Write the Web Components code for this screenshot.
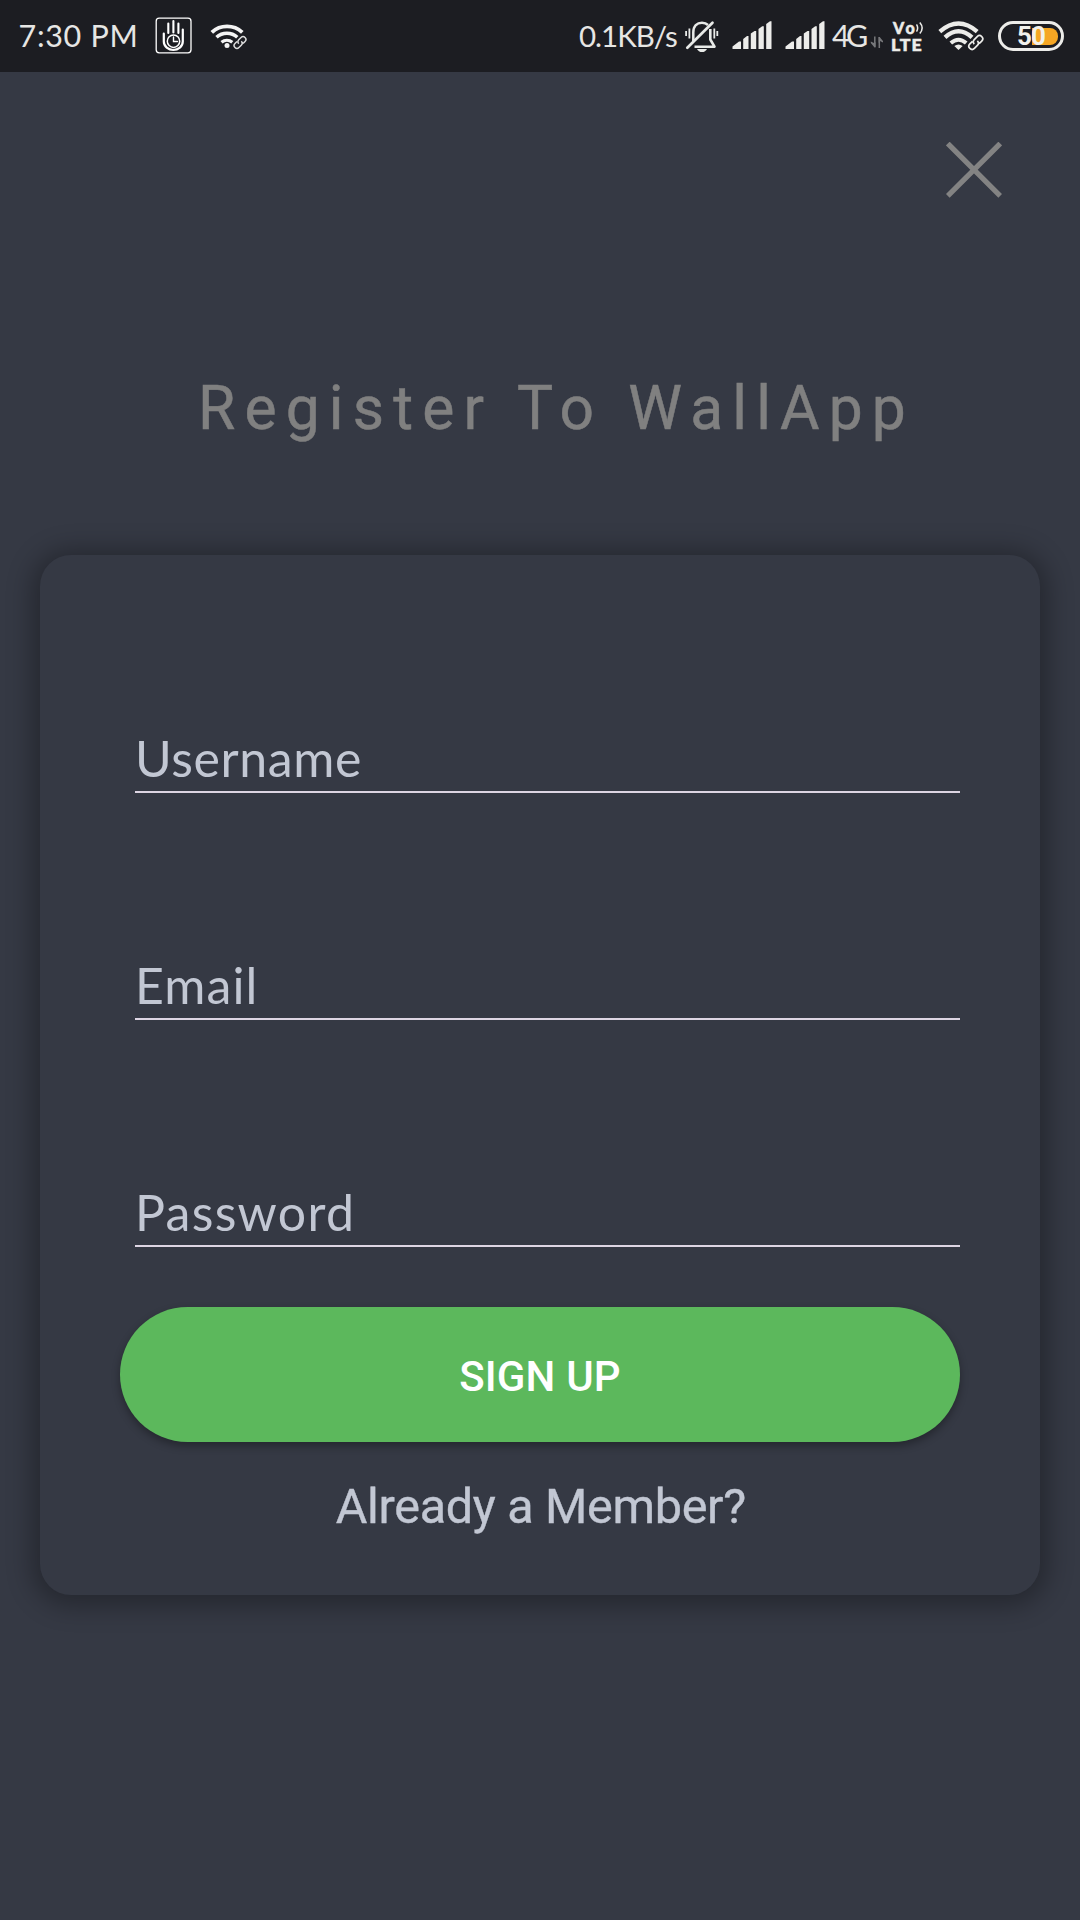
<!DOCTYPE html>
<html lang="en">
<head>
<meta charset="utf-8">
<title>WallApp</title>
<style>
html,body{margin:0;padding:0;background:#353944}
</style>
</head>
<body>
<register-screen></register-screen>
<script>
const define = (name, html, ready) => {
  const tpl = document.createElement('template');
  tpl.innerHTML = html;
  customElements.define(name, class extends HTMLElement {
    connectedCallback() {
      if (this.shadowRoot) return;
      this.attachShadow({mode: 'open'}).append(tpl.content.cloneNode(true));
      if (ready) ready(this, this.shadowRoot);
    }
  });
};

/* One line of text whose ink spans exactly the `w` attribute; `gap` widens its spaces. */
define('fit-text', `<style>
:host{display:block;white-space:pre;flex:none}
</style><slot></slot>`, (el) => {
  const text = el.textContent, cs = getComputedStyle(el);
  const c = document.createElement('canvas').getContext('2d');
  c.font = cs.fontWeight + ' ' + cs.fontSize + ' ' + cs.fontFamily;
  const m = c.measureText(text), w = +el.getAttribute('w');
  const gap = +(el.getAttribute('gap') || 0);
  const ink = m.actualBoundingBoxLeft + m.actualBoundingBoxRight + gap * (text.split(' ').length - 1);
  el.style.letterSpacing = (w - ink) / (text.length - 1) + 'px';
  el.style.wordSpacing = gap + 'px';
  el.style.textIndent = m.actualBoundingBoxLeft + 'px';
  el.style.width = w + 'px';
});

define('timer-icon', `<style>:host{display:block;flex:none;width:38px;height:72px}svg{display:block}</style>
<svg width="38" height="72" viewBox="155 0 38 72" fill="none" stroke="#fff" stroke-linecap="round">
<rect x="156.200" y="18.200" width="34.800" height="34.600" rx="3" stroke-width="1.300"/>
<path d="M168.300 23.500V33M173.400 21V32.500M178.400 23.500V33" stroke-width="2.100"/>
<path d="M163.800 33.500V41.500C163.800 46.500 168.500 50 173.300 50S182.800 46.500 182.800 41.500V29.500" stroke-width="2.200"/>
<circle cx="173.500" cy="41.200" r="6.200" stroke-width="1.500"/>
<path d="M173.500 37V41.500H177.500" stroke-width="1.400"/>
</svg>`);

define('wifi-small', `<style>:host{display:block;flex:none;width:38px;height:72px}svg{display:block}</style>
<svg width="38" height="72" viewBox="210 0 38 72" fill="none" stroke="#f4f4f4">
<path d="M211.800 32.300A22.500 22.500 0 0 1 242.300 32.300" stroke-width="3.800"/>
<path d="M216.500 37.300A15.500 15.500 0 0 1 237.300 37.300" stroke-width="3.500"/>
<path d="M221.500 42.200A8.500 8.500 0 0 1 232.300 42.200" stroke-width="3.200"/>
<circle cx="227" cy="45.500" r="2.500" fill="#f4f4f4" stroke="none"/>
<g transform="translate(240 42.500) rotate(-45)">
<rect x="-8" y="-3.300" width="16" height="6.600" rx="3.300" fill="#1c1d22" stroke="#1c1d22" stroke-width="2"/>
<path d="M-1.500 -2.800H-4.300A2.800 2.800 0 0 0 -4.300 2.800H-1A2.800 2.800 0 0 0 1.800 0M1.500 2.800H4.300A2.800 2.800 0 0 0 4.300 -2.800H1A2.800 2.800 0 0 0 -1.800 0" stroke-width="1.500" stroke="#ddd"/></g>
</svg>`);

define('muted-bell', `<style>:host{display:block;flex:none;width:36px;height:72px}svg{display:block}</style>
<svg width="36" height="72" viewBox="684 0 36 72" fill="none" stroke="#e8eae8">
<path d="M693.300 41V32.500C693.300 26 697 22.700 702 22.700C704.500 22.700 706.500 23.500 708 25" stroke-width="2.500"/>
<path d="M710.300 29V39.500L714.500 46.700H694.500" stroke-width="2.600" stroke-linejoin="round"/>
<path d="M687.300 47.800L712.500 22.800" stroke-width="2.700" stroke-linecap="round"/>
<path d="M697 48.900H707C706 51 704.300 52 702 52S698 51 697 48.900Z" fill="#e8eae8" stroke="none"/>
<path d="M686.100 31V36M714.300 28.500V38.500M717.300 31V36M689.400 28.500V38.500" stroke-width="1.800"/>
</svg>`);

define('signal-bars', `<style>:host{display:block;flex:none;width:40px;height:72px}svg{display:block}</style>
<svg width="40" height="72" viewBox="731.500 0 40 72" fill="#ececea">
<path d="M732 49V46.500L738.500 41.500H740.500V49ZM742.700 49V39L746.500 36H748V49ZM750.300 49V33.500L754 31H755.700V49ZM758 49V29L761.700 26.300H763.300V49ZM765.700 49V24L769.500 21.300H771V49Z"/>
</svg>`);

define('data-arrows', `<style>:host{display:block;flex:none;width:14px;height:72px}svg{display:block}</style>
<svg width="14" height="72" viewBox="870 0 14 72" stroke="#77787b" fill="none" stroke-width="1.500">
<path d="M874.800 36.500V47M879.300 48V37"/><path d="M875.500 42V47.500H874.500L870.800 43V41.500L874 43ZM878.600 43V37H879.600L883 41V42.500L880 41Z" fill="#77787b" stroke="none"/>
</svg>`);

define('volte-badge', `<style>:host{display:block;flex:none;width:32px;height:72px;color:#ecece9}
.col{display:flex;flex-direction:column;padding-top:19.500px}
.row{display:flex;height:15px}
fit-text{font:900 16px/15.500px Lato,sans-serif;-webkit-text-stroke:.5px #ecece9}
.lte{font:900 17.800px/18px Lato,sans-serif;margin-top:.500px}
svg{display:block;margin-left:1px}
</style>
<div class="col"><div class="row"><fit-text w="22.500">Vo</fit-text>
<svg width="8" height="15" viewBox="0 0 8 15" fill="none" stroke="#ecece9" stroke-width="1.500"><path d="M.5 4.500Q2.800 8 .5 11.500M3.800 2.500Q8.500 8 3.800 13.500"/></svg></div>
<fit-text class="lte" w="29.500">LTE</fit-text></div>`);

define('wifi-large', `<style>:host{display:block;flex:none;width:48px;height:72px}svg{display:block}</style>
<svg width="48" height="72" viewBox="937 0 48 72" fill="none" stroke="#ecece9">
<path d="M939.800 31.700Q958.500 15.500 977.200 31.700" stroke-width="4.300"/>
<path d="M945 37.300Q958.500 25 972 37.300" stroke-width="4.300"/>
<path d="M950.800 43Q958.500 36.500 966.200 43" stroke-width="4"/>
<path d="M954.300 46Q958.500 42.900 962.700 46L958.500 50Z" fill="#ecece9" stroke="none"/>
<g transform="translate(975.800 42.500) rotate(-45)">
<rect x="-9.500" y="-4" width="19" height="8" rx="4" fill="#1c1d22" stroke="#1c1d22" stroke-width="2"/>
<path d="M-1.500 -3.200H-5.200A3.200 3.200 0 0 0 -5.200 3.200H-1A3.200 3.200 0 0 0 2.200 0M1.500 3.200H5.200A3.200 3.200 0 0 0 5.200 -3.200H1A3.200 3.200 0 0 0 -2.200 0" stroke-width="1.700"/></g>
</svg>`);

define('battery-pill', `<style>
:host{display:block;flex:none;box-sizing:border-box;width:66px;height:30px;border:3px solid #ecece9;border-radius:15px;padding:3.500px 3.500px 3.500px 30.500px}
.charge{height:17.500px;width:26.500px;border-radius:0 8px 8px 0;background:#f5a623;position:relative}
fit-text{position:absolute;left:-13.500px;top:-3.500px;font:700 26px/25px Roboto,sans-serif;color:#f1f1ec}
</style><div class="charge"><fit-text w="27">50</fit-text></div>`);

define('status-bar', `<style>
:host{display:flex;height:72px;background:#1c1d22;color:#e6e6e4;font:400 30.500px/71px Lato,sans-serif;box-sizing:border-box;padding-left:19.500px}
.t{height:72px}
battery-pill{margin:21px 0 0 13px}
</style>
<fit-text class="t" w="116">7:30 PM</fit-text>
<timer-icon style="margin-left:19px"></timer-icon>
<wifi-small style="margin-left:17.500px"></wifi-small>
<fit-text style="margin-left:331px;font-size:29.500px" w="98">0.1KB/s</fit-text>
<muted-bell style="margin-left:7px"></muted-bell>
<signal-bars style="margin-left:12px"></signal-bars>
<signal-bars style="margin-left:13px"></signal-bars>
<fit-text style="margin-left:7px;line-height:70px" w="35">4G</fit-text>
<data-arrows style="margin-left:3px"></data-arrows>
<volte-badge style="margin-left:8px"></volte-badge>
<wifi-large style="margin-left:13px"></wifi-large>
<battery-pill></battery-pill>`);

define('close-button', `<style>:host{display:block;width:56px;height:56px}svg{display:block}</style>
<svg width="56" height="56" viewBox="0 0 56 56" stroke="#838383" stroke-width="5.200"><path d="M1.800 1.500L54.200 53.900M54.200 1.500L1.800 53.900"/></svg>`);

define('form-field', `<style>
:host{display:block;box-sizing:border-box;height:65px;border-bottom:2px solid #ddd5e3;padding-left:4px;font:400 50px/61px Lato,sans-serif;color:#c2c7d3}
</style><slot></slot>`);

define('pill-button', `<style>
:host{display:flex;justify-content:center;height:135px;border-radius:67.500px;background:#5cb85c;color:#fff;font:500 42px/139px Roboto,sans-serif;box-shadow:0 4px 8px rgba(0,0,0,.32)}
</style><slot></slot>`);

define('form-card', `<style>
:host{display:flex;flex-direction:column;box-sizing:border-box;width:1000px;height:1040px;border-radius:31px;background:#353944;padding:173px 80px 0;box-shadow:0 3px 26px 8px rgba(0,0,0,.3)}
</style><slot></slot>`);

define('register-screen', `<style>
:host{display:flex;flex-direction:column;width:1080px;height:1920px;background:#353944;overflow:hidden}
header{display:flex;justify-content:flex-end;padding:70px 78px 0 0;height:56px}
h1{margin:171px 0 0 203px;font:400 60.500px/80px Roboto,sans-serif;color:#808080;height:80px;-webkit-text-stroke:.5px #808080}
form-card{margin:106px 40px 0}
.fields{display:flex;flex-direction:column;gap:162px;margin-left:15px}
pill-button{margin-top:60px}
.login{align-self:center;margin-top:37px;font:400 48.500px/56px Roboto,sans-serif;color:#c2c7d3;-webkit-text-stroke:.4px #c2c7d3}
</style>
<status-bar></status-bar>
<header><close-button></close-button></header>
<h1><fit-text w="702" gap="1">Register To WallApp</fit-text></h1>
<form-card>
<div class="fields">
<form-field><fit-text w="221">Username</fit-text></form-field>
<form-field><fit-text w="115.500">Email</fit-text></form-field>
<form-field><fit-text w="212">Password</fit-text></form-field>
</div>
<pill-button><fit-text w="159.500">SIGN UP</fit-text></pill-button>
<fit-text class="login" w="408.500">Already a Member?</fit-text>
</form-card>`);
</script>
</body>
</html>
